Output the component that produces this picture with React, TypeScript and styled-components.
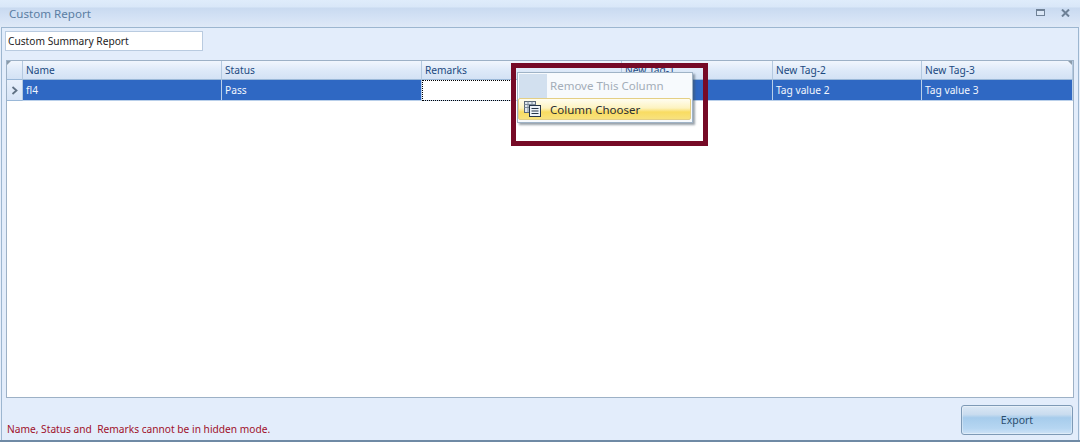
import styled, { createGlobalStyle } from "styled-components";

const GlobalStyle = createGlobalStyle`
  html, body {
    margin: 0;
    padding: 0;
    background: #dfe9f7;
  }
  body {
    font-family: "Noto Sans", "Open Sans", sans-serif;
    font-size: 10.2px;
  }
`;

const columnTemplate = "16px 199px 200px 200px 151px 149px 151px";

const Window = styled.div`
  position: relative;
  width: 1080px;
  height: 442px;
  overflow: hidden;
  display: flex;
  flex-direction: column;
  box-sizing: border-box;
  background: #e6eefa;
  border-bottom: 2px solid #6f8aa5;
`;

const TitleBar = styled.div`
  height: 27px;
  flex: none;
  box-sizing: border-box;
  display: flex;
  align-items: center;
  justify-content: space-between;
  padding: 0 10px 0 9px;
  background: linear-gradient(to bottom, #dfecfb 0, #d9e7f8 7px, #c9daf0 8px, #d4e2f5 18px, #dfe9f7 27px);
`;

const Title = styled.span`
  font-size: 11.6px;
  color: #5b7ea3;
`;

const WindowButtons = styled.div`
  display: flex;
  align-items: center;
  gap: 16px;
  margin-bottom: 2px;
`;

const Panel = styled.div`
  flex: 1;
  min-height: 0;
  display: flex;
  flex-direction: column;
  margin: 0 1px;
  border: 1px solid #9cb6d0;
  border-bottom: none;
  padding: 3px 3px 0 3px;
  background: #e3edfb;
`;

const NameInput = styled.input`
  width: 198px;
  height: 20px;
  box-sizing: border-box;
  margin: 0 0 9px;
  padding: 0 2px;
  border: 1px solid #b9cbe0;
  background: #fff;
  color: #1d1d1d;
  font: 10.2px "Noto Sans", sans-serif;
  outline: none;
`;

const Grid = styled.div`
  width: 1068px;
  margin-left: 1px;
  height: 338px;
  flex: none;
  box-sizing: border-box;
  border: 1px solid #9db1c6;
  background: #fff;
`;

const Row = styled.div`
  display: grid;
  grid-template-columns: ${columnTemplate};
`;

const HeaderCell = styled.div<{ $corner?: "left" | "right" }>`
  position: relative;
  height: 19px;
  box-sizing: border-box;
  padding: 1px 0 0 3px;
  border-right: 1px solid #b4c9e0;
  border-bottom: 1px solid #9ab8d8;
  background: linear-gradient(to bottom, #f1f6fd, #dde9f8 55%, #d3e2f5);
  color: #1c4a80;
  line-height: 16px;
  white-space: nowrap;
  overflow: hidden;

  &::after {
    content: "";
    display: ${(p) => (p.$corner ? "block" : "none")};
    position: absolute;
    top: 0;
    ${(p) => (p.$corner === "left" ? "left: 0;" : "right: 0;")}
    border-top: 4px solid #8b9baa;
    ${(p) =>
      p.$corner === "left"
        ? "border-right: 4px solid transparent;"
        : "border-left: 4px solid transparent;"}
  }
`;

const Indicator = styled.div`
  height: 21px;
  display: flex;
  align-items: center;
  justify-content: center;
  box-sizing: border-box;
  border-right: 1px solid #b4c9e0;
  border-bottom: 1px solid #9ab8d8;
  background: linear-gradient(to bottom, #e8f0fb, #d7e4f6);
`;

const DataCell = styled.div<{ $focused?: boolean }>`
  height: 21px;
  box-sizing: border-box;
  padding: 2px 0 0 3px;
  line-height: 16px;
  white-space: nowrap;
  overflow: hidden;
  color: ${(p) => (p.$focused ? "#000" : "#f2f6fd")};
  background: ${(p) => (p.$focused ? "#fff" : "#2f68c3")};
  border-right: 1px solid #b9cfea;
  border-bottom: 1px solid #b9cfea;
  outline: ${(p) => (p.$focused ? "1px dotted #000" : "none")};
  outline-offset: -1px;
`;

const Footer = styled.div`
  flex: 1;
  display: flex;
  align-items: flex-end;
  justify-content: space-between;
  padding: 0 2px 5px 2px;
`;

const Notice = styled.span`
  color: #a0102a;
  line-height: 15px;
  margin-bottom: -2px;
`;

const ExportButton = styled.button`
  width: 112px;
  height: 30px;
  box-sizing: border-box;
  border: 1px solid #7e9ab6;
  border-radius: 3px;
  background: linear-gradient(to bottom, #dbe8f5 0, #c9dcef 30%, #a6ccec 42%, #b6d6f2 80%, #cfe3f6 100%);
  box-shadow: inset 0 0 0 1px rgba(255, 255, 255, 0.35);
  color: #2b4e6e;
  font: 10.5px "Noto Sans", sans-serif;
  padding: 0;
`;

const Menu = styled.div`
  position: absolute;
  left: 517px;
  top: 72px;
  width: 176px;
  box-sizing: border-box;
  padding: 1px 1px 2px;
  border: 1px solid #9fb3c6;
  background: #f7fafd;
  box-shadow: 2px 2px 2px rgba(70, 85, 100, 0.55);
`;

const MenuItem = styled.div<{ $active?: boolean; $disabled?: boolean }>`
  height: ${(p) => (p.$active ? 22 : 24)}px;
  box-sizing: border-box;
  display: flex;
  align-items: center;
  margin-left: ${(p) => (p.$active ? -1 : 0)}px;
  padding-bottom: ${(p) => (p.$disabled ? 2 : 0)}px;
  color: ${(p) => (p.$disabled ? "#a3adb8" : "#2a2e33")};
  font-size: 11.5px;
  background: ${(p) =>
    p.$active
      ? "linear-gradient(to bottom, #fffdf0 0, #fdf3c0 45%, #f9dc62 65%, #f8e27e 100%)"
      : "linear-gradient(to right, #d2e0ef 0, #d2e0ef 28px, #f7fafd 28px)"};
  border: ${(p) => (p.$active ? "1px solid #e4cf85" : "none")};
  border-radius: ${(p) => (p.$active ? "2px" : "0")};
`;

const MenuIcon = styled.span`
  width: 31px;
  flex: none;
  display: flex;
  justify-content: center;
  padding-right: 5px;
  box-sizing: border-box;
`;

const Highlight = styled.div`
  position: absolute;
  left: 511px;
  top: 63px;
  width: 197px;
  height: 83px;
  box-sizing: border-box;
  border: 5px solid #760a26;
  pointer-events: none;
`;

const columns = ["Name", "Status", "Remarks", "New Tag-1", "New Tag-2", "New Tag-3"];
const values = ["fl4", "Pass", "", "", "Tag value 2", "Tag value 3"];

export default function App() {
  return (
    <Window>
      <GlobalStyle />
      <TitleBar>
        <Title>Custom Report</Title>
        <WindowButtons>
          <svg width="9" height="7" viewBox="0 0 9 7">
            <rect x="0" y="0" width="9" height="7" fill="#6f8196" />
            <rect x="1" y="2" width="7" height="4" fill="#dbe7f6" />
          </svg>
          <svg width="9" height="8" viewBox="0 0 9 8">
            <path d="M1 0.5 L8 7.5 M8 0.5 L1 7.5" stroke="#6d8096" strokeWidth="2" fill="none" />
          </svg>
        </WindowButtons>
      </TitleBar>
      <Panel>
        <NameInput defaultValue="Custom Summary Report" />
        <Grid>
          <Row>
            <HeaderCell $corner="left" />
            {columns.map((c, i) => (
              <HeaderCell key={c} $corner={i === columns.length - 1 ? "right" : undefined}>
                {c}
              </HeaderCell>
            ))}
          </Row>
          <Row>
            <Indicator>
              <svg width="7" height="9" viewBox="0 0 7 9">
                <path d="M1.5 1 L5.5 4.5 L1.5 8" stroke="#5f7184" strokeWidth="1.8" fill="none" />
              </svg>
            </Indicator>
            {values.map((v, i) => (
              <DataCell key={i} $focused={i === 2}>
                {v}
              </DataCell>
            ))}
          </Row>
        </Grid>
        <Footer>
          <Notice>Name, Status and&nbsp; Remarks cannot be in hidden mode.</Notice>
          <ExportButton>Export</ExportButton>
        </Footer>
      </Panel>
      <Menu>
        <MenuItem $disabled>
          <MenuIcon />
          Remove This Column
        </MenuItem>
        <MenuItem $active>
          <MenuIcon>
            <svg width="17" height="16" viewBox="0 0 17 16">
              <rect x="0.5" y="0.5" width="11" height="11" fill="#dfe6ee" stroke="#5b6877" />
              <path d="M0.5 3.5 H11.5 M0.5 6.5 H11.5 M4 0.5 V11.5 M8 0.5 V11.5" stroke="#7d8a98" fill="none" />
              <rect x="5.5" y="4.5" width="11" height="11" fill="#eef3f8" stroke="#27364a" />
              <path d="M7.5 7.5 H14.5 M7.5 10 H14.5 M7.5 12.5 H14.5" stroke="#27364a" fill="none" />
            </svg>
          </MenuIcon>
          Column Chooser
        </MenuItem>
      </Menu>
      <Highlight />
    </Window>
  );
}
